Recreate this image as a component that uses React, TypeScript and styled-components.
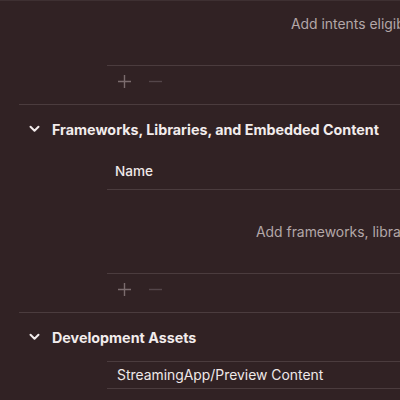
import React from "react";
import styled, { createGlobalStyle } from "styled-components";

const GlobalStyle = createGlobalStyle`
  html, body {
    margin: 0;
    padding: 0;
    background: #312224;
  }
  body {
    font-family: Inter, "Liberation Sans", sans-serif;
    -webkit-font-smoothing: antialiased;
  }
`;

const LINE = "#4b3c3e";

export default function App() {
  return (
    <>
      <GlobalStyle />
      <Page>
        {/* tail of the intents section */}
        <Table>
          <EmptyArea height={65} offset={291}>
            Add intents eligible for in-app handling here
          </EmptyArea>
        </Table>
        <Toolbar>
          <PlusIcon />
          <MinusIcon />
        </Toolbar>
        <Divider />

        <SectionHeader>
          <Chevron />
          <span>Frameworks, Libraries, and Embedded Content</span>
        </SectionHeader>
        <Table>
          <HeaderRow>Name</HeaderRow>
          <EmptyArea height={84} offset={256}>
            Add frameworks, libraries, and embedded content here
          </EmptyArea>
        </Table>
        <Toolbar>
          <PlusIcon />
          <MinusIcon />
        </Toolbar>
        <Divider />

        <SectionHeader>
          <Chevron />
          <span>Development Assets</span>
        </SectionHeader>
        <Table bordered>
          <Row>StreamingApp/Preview Content</Row>
        </Table>
      </Page>
    </>
  );
}

function Chevron() {
  return (
    <svg width="11" height="8" viewBox="0 0 11 8">
      <path
        d="M1.5 1.8 L5.5 5.8 L9.5 1.8"
        fill="none"
        stroke="#f2ecec"
        strokeWidth="2"
        strokeLinecap="round"
        strokeLinejoin="round"
      />
    </svg>
  );
}

function PlusIcon() {
  return (
    <svg width="15" height="15" viewBox="0 0 15 15">
      <path d="M7.5 1 V14 M1 7.5 H14" stroke="#7b6c6e" strokeWidth="1.4" />
    </svg>
  );
}

function MinusIcon() {
  return (
    <svg width="15" height="15" viewBox="0 0 15 15">
      <path d="M1 7.5 H14" stroke="#54464a" strokeWidth="1.4" />
    </svg>
  );
}

const Page = styled.div`
  width: 400px;
  height: 400px;
  overflow: hidden;
  border-top: 1px solid #3e3032;
  box-sizing: border-box;
  display: flex;
  flex-direction: column;
`;

// table block, starts at the name column
const Table = styled.div<{ bordered?: boolean }>`
  margin-left: 107px;
  display: flex;
  flex-direction: column;
  border-top: ${(p) => (p.bordered ? `1px solid ${LINE}` : "none")};
  border-bottom: 1px solid ${LINE};
`;

const EmptyArea = styled.div<{ height: number; offset: number }>`
  height: ${(p) => p.height - 1}px;
  display: flex;
  align-items: center;
  padding-left: ${(p) => p.offset - 107}px;
  padding-bottom: ${(p) => (p.height > 70 ? 0 : 18)}px;
  box-sizing: border-box;
  white-space: nowrap;
  color: #b3a7a8;
  font-size: 13.9px;
`;

const HeaderRow = styled.div`
  height: 36px;
  display: flex;
  align-items: center;
  padding-left: 8px;
  border-bottom: 1px solid ${LINE};
  color: #efe8e8;
  font-size: 13.6px;
  font-weight: 500;
`;

const Row = styled.div`
  height: 26px;
  display: flex;
  align-items: center;
  padding-left: 10px;
  color: #efe8e8;
  font-size: 13.9px;
  white-space: nowrap;
`;

// +/− buttons under a table
const Toolbar = styled.div`
  margin-left: 117px;
  height: 31px;
  display: flex;
  align-items: center;
  gap: 16px;
`;

const Divider = styled.div`
  margin: 7px 0 0 19px;
  border-top: 1px solid ${LINE};
`;

const SectionHeader = styled.div`
  height: 48px;
  display: flex;
  align-items: center;
  gap: 12px;
  padding-left: 29px;
  color: #f2ecec;
  font-size: 14.3px;
  font-weight: 700;
  white-space: nowrap;
`;
